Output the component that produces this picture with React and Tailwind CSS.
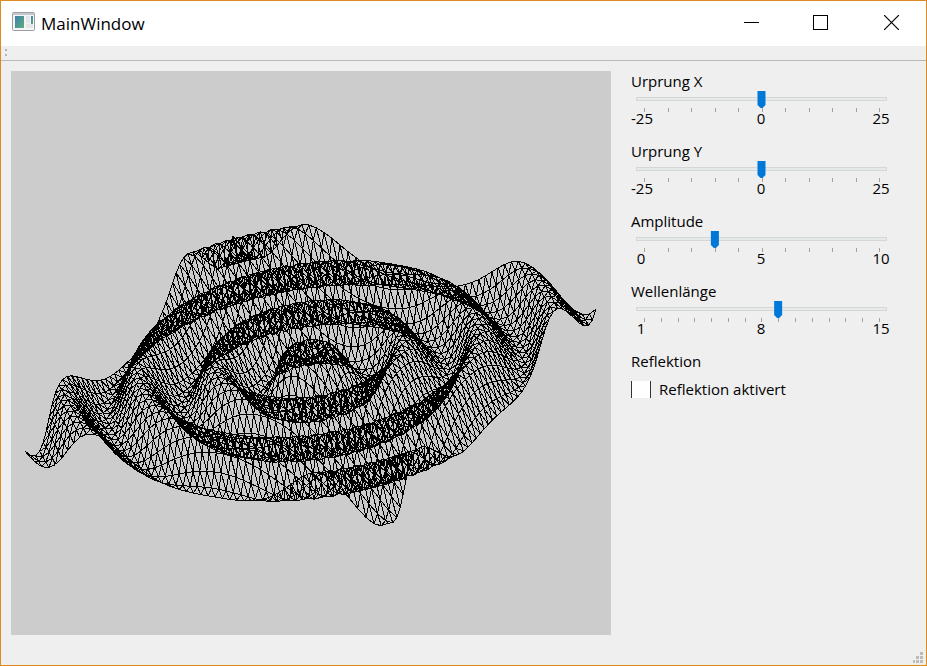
import { useMemo, useState } from "react";

const CELLS = 50;
const RANGE_U = [-25.2, 24.1];
const RANGE_V = [-24.9, 25.4];
const CENTER = [301, 300];
const AXIS_U = [7.33, 1.27];
const AXIS_V = [4.14, -4.18];
const AXIS_W = [-1.04, -7.2];

const lerp = ([from, to], k) => from + ((to - from) * k) / CELLS;

function buildMesh(originX, originY, amplitude, wavelength) {
  const point = (i, j) => {
    const u = lerp(RANGE_U, i);
    const v = lerp(RANGE_V, j);
    const r = Math.hypot(u - originX, v - originY);
    const z = amplitude * Math.sin((2 * Math.PI * r) / wavelength);
    const x = CENTER[0] + u * AXIS_U[0] + v * AXIS_V[0] + z * AXIS_W[0];
    const y = CENTER[1] + u * AXIS_U[1] + v * AXIS_V[1] + z * AXIS_W[1];
    return `${x.toFixed(1)} ${y.toFixed(1)}`;
  };
  const parts = [];
  for (let i = 0; i <= CELLS; i++) {
    for (let j = 0; j <= CELLS; j++) {
      const p = point(i, j);
      if (i < CELLS) parts.push(`M${p}L${point(i + 1, j)}`);
      if (j < CELLS) parts.push(`M${p}L${point(i, j + 1)}`);
      if (i < CELLS && j < CELLS) {
        parts.push(`M${point(i, j + 1)}L${point(i + 1, j)}`);
      }
    }
  }
  return parts.join("");
}

function WaveView({ path }) {
  return (
    <div className="min-w-0 flex-1 bg-[#cccccc]">
      <svg viewBox="0 0 600 564" className="block h-full w-full" role="img">
        <path d={path} fill="none" stroke="#000" strokeWidth="1" shapeRendering="crispEdges" />
      </svg>
    </div>
  );
}

function SliderField({ id, label, min, max, value, onChange, marks, ticks }) {
  return (
    <div className="flex flex-col">
      <label htmlFor={id} className="h-5 leading-5">
        {label}
      </label>
      <input
        id={id}
        type="range"
        min={min}
        max={max}
        value={value}
        onChange={(e) => onChange(Number(e.target.value))}
        className="ml-[5px] block h-4 w-[251px] appearance-none bg-transparent [&::-webkit-slider-runnable-track]:h-1 [&::-webkit-slider-runnable-track]:border [&::-webkit-slider-runnable-track]:border-[#d6d6d6] [&::-webkit-slider-runnable-track]:bg-[#e7eaea] [&::-webkit-slider-thumb]:-mt-[7px] [&::-webkit-slider-thumb]:h-[17px] [&::-webkit-slider-thumb]:w-4 [&::-webkit-slider-thumb]:appearance-none [&::-webkit-slider-thumb]:bg-[#0078d7] [&::-webkit-slider-thumb]:[clip-path:polygon(4px_0,12px_0,12px_14px,9px_17px,7px_17px,4px_14px)]"
      />
      <div className="mt-px ml-[13px] flex w-[236px] justify-between">
        {Array.from({ length: ticks }, (_, i) => (
          <span key={i} className="h-1 w-px bg-[#a3a39a]" />
        ))}
      </div>
      <div className="-mt-1 flex h-5 justify-between leading-5">
        {marks.map((mark) => (
          <span key={mark} className="w-5 text-center whitespace-nowrap">
            {mark}
          </span>
        ))}
      </div>
    </div>
  );
}

function TitleBar() {
  return (
    <header className="flex h-[45px] items-center bg-white pl-[11px]">
      <svg width="24" height="20" viewBox="0 0 24 20" className="-mt-1">
        <defs>
          <linearGradient id="pane" x1="0" y1="0" x2="1" y2="1">
            <stop offset="0" stopColor="#3f7fae" />
            <stop offset="1" stopColor="#5fae78" />
          </linearGradient>
        </defs>
        <rect x="0.5" y="0.5" width="22" height="18" rx="1" fill="#f4f5f6" stroke="#9a9da2" />
        <rect x="1" y="1" width="21" height="2" fill="#c5c9cf" />
        <rect x="3" y="4" width="9" height="12" fill="url(#pane)" />
        <rect x="14" y="4" width="4" height="7" fill="#e6e6e6" />
        <rect x="14" y="12" width="7" height="4" fill="#e6e6e6" />
        <rect x="19" y="4" width="2" height="8" fill="url(#pane)" />
      </svg>
      <h1 className="ml-[5px] flex-1 text-[17px] leading-6">MainWindow</h1>
      <button aria-label="Minimize" className="flex h-[43px] w-[69px] items-center justify-center self-start">
        <svg width="15" height="15" shapeRendering="crispEdges">
          <path d="M0 7.5H15" stroke="#000" />
        </svg>
      </button>
      <button aria-label="Maximize" className="flex h-[43px] w-[69px] items-center justify-center self-start">
        <svg width="15" height="15" shapeRendering="crispEdges">
          <rect x="0.5" y="0.5" width="14" height="14" fill="none" stroke="#000" />
        </svg>
      </button>
      <button aria-label="Close" className="ml-[2px] flex h-[43px] w-[69px] items-center justify-center self-start">
        <svg width="15" height="15">
          <path d="M0 0L15 15M15 0L0 15" stroke="#000" strokeWidth="1.2" />
        </svg>
      </button>
    </header>
  );
}

export default function App() {
  const [originX, setOriginX] = useState(0);
  const [originY, setOriginY] = useState(0);
  const [amplitude, setAmplitude] = useState(3);
  const [wavelength, setWavelength] = useState(9);
  const [reflection, setReflection] = useState(false);

  const path = useMemo(
    () => buildMesh(originX, originY, amplitude, wavelength),
    [originX, originY, amplitude, wavelength]
  );

  return (
    <div className="flex h-screen flex-col border border-[#dd8a1f] bg-[#efefef] font-['Open_Sans','Noto_Sans',sans-serif] text-[15px] text-black">
      <TitleBar />
      <div className="flex h-[15px] flex-col gap-[3px] border-b border-[#b9b9b9] pt-[3px] pl-1">
        <span className="size-[2px] bg-[#b4b4b4]" />
        <span className="size-[2px] bg-[#b4b4b4]" />
      </div>
      <main className="flex min-h-0 flex-1 gap-5 pt-[10px] pr-[35px] pl-[10px]">
        <WaveView path={path} />
        <section className="flex w-[260px] flex-col gap-[13px]">
          <SliderField id="origin-x" label="Urprung X" min={-25} max={25} value={originX} onChange={setOriginX} marks={["-25", "0", "25"]} ticks={11} />
          <SliderField id="origin-y" label="Urprung Y" min={-25} max={25} value={originY} onChange={setOriginY} marks={["-25", "0", "25"]} ticks={11} />
          <SliderField id="amplitude" label="Amplitude" min={0} max={10} value={amplitude} onChange={setAmplitude} marks={["0", "5", "10"]} ticks={11} />
          <SliderField id="wavelength" label="Wellenlänge" min={1} max={15} value={wavelength} onChange={setWavelength} marks={["1", "8", "15"]} ticks={15} />
          <div className="flex flex-col gap-2">
            <h2 className="leading-5">Reflektion</h2>
            <label className="flex items-center gap-2 leading-5">
              <input
                type="checkbox"
                checked={reflection}
                onChange={(e) => setReflection(e.target.checked)}
                className="h-[17px] w-5 appearance-none border-x border-[#333333] bg-white checked:bg-[#0078d7]"
              />
              Reflektion aktivert
            </label>
          </div>
        </section>
      </main>
      <footer className="flex h-[30px] items-end justify-end pr-[3px] pb-[2px]">
        <svg width="10" height="11" fill="#bcbcbc" shapeRendering="crispEdges">
          <path d="M7 0h3v3h-3zM3 4h3v3h-3zM7 4h3v3h-3zM0 8h2v3h-2zM3 8h3v3h-3zM7 8h3v3h-3z" />
        </svg>
      </footer>
    </div>
  );
}
